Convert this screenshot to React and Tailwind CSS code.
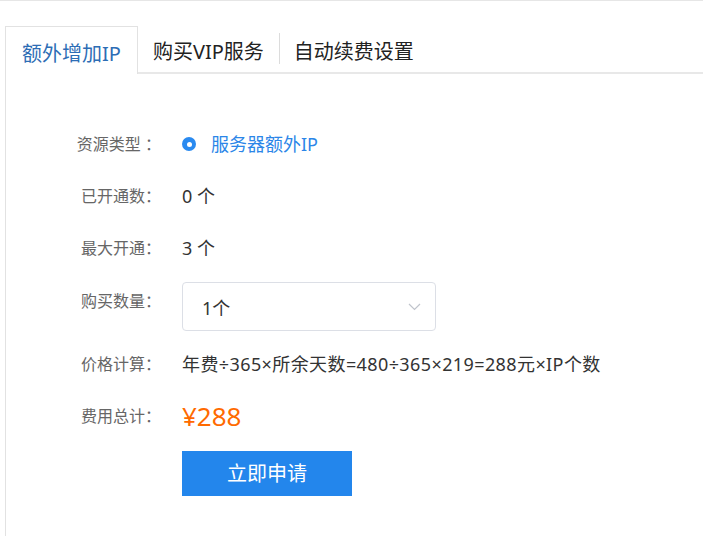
import React, { useState } from 'react';

const font = { fontFamily: '"Noto Sans", "Noto Sans CJK SC", "Microsoft YaHei", sans-serif' };

function Row({ label, children, className = '' }) {
    return (
        <div className={`flex items-center ${className}`}>
            <div className="w-[155px] shrink-0 text-right text-[16px] leading-[24px] text-[#666]">{label}</div>
            <div className="ml-[21px] flex items-center">{children}</div>
        </div>
    );
}

export default function App() {
    const [tab, setTab] = useState(0);
    const tabs = ['额外增加IP', '购买VIP服务', '自动续费设置'];

    return (
        <div className="h-[536px] w-[703px] overflow-hidden bg-white" style={font}>
            <div className="h-px w-full bg-[#e6e6e6]"></div>

            {/* tabs */}
            <div className="mt-[25px] flex h-[48px] items-stretch pl-[5px]">
                {tabs.map((t, i) => {
                    const active = i === tab;
                    return (
                        <React.Fragment key={t}>
                            {i === 2 && (
                                <div className="flex flex-col border-b-2 border-[#e8e8e8]">
                                    <div className="mt-[7px] h-[31px] w-px bg-[#dcdcdc]"></div>
                                </div>
                            )}
                            <button
                                type="button"
                                onClick={() => setTab(i)}
                                className={
                                    active
                                        ? 'border border-b-0 border-[#e2e2e2] bg-white pl-[16px] pr-[16px] pt-[6px] text-[20px] leading-[28px] text-[#2d6db5]'
                                        : `border-b-2 border-[#e8e8e8] pt-[6px] text-[20px] leading-[28px] text-[#222] ${i === 1 ? 'pl-[15px] pr-[15px]' : 'pl-[14px] pr-[16px]'}`
                                }
                            >
                                {t}
                            </button>
                        </React.Fragment>
                    );
                })}
                <div className="flex-1 border-b-2 border-[#e8e8e8]"></div>
            </div>

            {/* panel */}
            <div className="ml-[5px] h-[470px] border-l border-[#e2e2e2] pt-[44px]">
                <Row label="资源类型 ：" className="h-[52px]">
                    <span className="flex h-[14px] w-[14px] items-center justify-center rounded-full bg-[#2a8af0]">
                        <span className="h-[5px] w-[5px] rounded-full bg-white"></span>
                    </span>
                    <span className="ml-[15px] text-[18px] leading-[24px] text-[#2b86e8]">服务器额外IP</span>
                </Row>
                <Row label="已开通数：" className="h-[52px]">
                    <span className="text-[18px] leading-[24px] text-[#333]">0 个</span>
                </Row>
                <Row label="最大开通：" className="h-[52px]">
                    <span className="text-[18px] leading-[24px] text-[#333]">3 个</span>
                </Row>

                <div className="mt-[8px] flex items-start">
                    <div className="w-[155px] shrink-0 pt-[7px] text-right text-[16px] leading-[24px] text-[#666]">购买数量：</div>
                    <div className="ml-[21px] flex h-[49px] w-[254px] items-center justify-between rounded-[4px] border border-[#dcdfe6] pl-[19px] pr-[14px]">
                        <span className="pt-[2px] text-[18px] leading-[24px] text-[#333]">1个</span>
                        <svg width="13" height="8" viewBox="0 0 13 8" fill="none">
                            <path d="M1 1l5.5 5.5L12 1" stroke="#c0c4cc" strokeWidth="1.2" />
                        </svg>
                    </div>
                </div>

                <Row label="价格计算：" className="mt-[21px] h-[24px]">
                    <span className="whitespace-nowrap text-[18px] leading-[24px] tracking-[0.4px] text-[#333]">年费÷365×所余天数=480÷365×219=288元×IP个数</span>
                </Row>

                <Row label="费用总计：" className="mt-[24px] h-[32px]">
                    <span className="text-[26px] leading-[32px] text-[#ff6a00]">¥288</span>
                </Row>

                <div className="ml-[176px] mt-[19px]">
                    <button type="button" className="h-[45px] w-[170px] bg-[#2386ec] text-[20px] text-white">立即申请</button>
                </div>
            </div>
        </div>
    );
}
